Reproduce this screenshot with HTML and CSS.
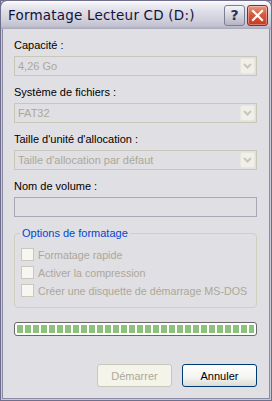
FILE: index.html
```html
<!DOCTYPE html>
<html lang="fr">
<head>
    <meta charset="UTF-8">
    <meta name="viewport" content="width=device-width, initial-scale=1.0">
    <title>Formatage Lecteur CD (D:)</title>
    <link rel="stylesheet" href="styles.css">
</head>
<body>
    <div class="window">
        <div class="titlebar">
            <span class="title">Formatage Lecteur CD (D:)</span>
            <div class="controls">
                <span class="tb-btn help">?</span>
                <span class="tb-btn close">
                    <svg width="13" height="13" viewBox="0 0 13 13">
                        <path d="M2 2 L11 11 M11 2 L2 11" stroke="#fff" stroke-width="2.2" stroke-linecap="square"/>
                    </svg>
                </span>
            </div>
        </div>

        <div class="client">
            <div class="label">Capacité :</div>
            <div class="combo">
                <span class="value">4,26 Go</span>
                <span class="arrow"><svg width="9" height="6" viewBox="0 0 9 6"><path d="M1 1 L4.5 4.5 L8 1" fill="none" stroke="#c9c7ba" stroke-width="2"/></svg></span>
            </div>

            <div class="label">Système de fichiers :</div>
            <div class="combo">
                <span class="value">FAT32</span>
                <span class="arrow"><svg width="9" height="6" viewBox="0 0 9 6"><path d="M1 1 L4.5 4.5 L8 1" fill="none" stroke="#c9c7ba" stroke-width="2"/></svg></span>
            </div>

            <div class="label">Taille d'unité d'allocation :</div>
            <div class="combo">
                <span class="value">Taille d'allocation par défaut</span>
                <span class="arrow"><svg width="9" height="6" viewBox="0 0 9 6"><path d="M1 1 L4.5 4.5 L8 1" fill="none" stroke="#c9c7ba" stroke-width="2"/></svg></span>
            </div>

            <div class="label">Nom de volume :</div>
            <div class="textbox"></div>

            <fieldset class="group">
                <legend>Options de formatage</legend>
                <div class="check"><span class="box"></span>Formatage rapide</div>
                <div class="check"><span class="box"></span>Activer la compression</div>
                <div class="check"><span class="box"></span>Créer une disquette de démarrage MS-DOS</div>
            </fieldset>

            <div class="progress"><div class="fill"></div></div>

            <div class="buttons">
                <span class="btn disabled">Démarrer</span>
                <span class="btn default">Annuler</span>
            </div>
        </div>
    </div>
</body>
</html>
```

FILE: styles.css
```css
body {
    margin: 0;
    background-color: #e0dfe3;
}
.window {
    width: 272px;
    height: 401px;
    box-sizing: border-box;
    background-color: #e0dfe3;
    border: 1px solid #6f6e8c;
    box-shadow: inset 0 0 0 1px #c8c7d6, inset 0 0 0 2px #8c8ba6;
    display: flex;
    flex-direction: column;
    font-family: "Liberation Sans", Arial, sans-serif;
    font-size: 11px;
}
.titlebar {
    height: 28px;
    margin: -1px -1px 0 -1px;
    border-radius: 7px 7px 0 0;
    border: 1px solid #6f6e8c;
    border-bottom: none;
    background: linear-gradient(#ffffff 0%, #eeeef4 12%, #dcdce6 40%, #cfcfdb 70%, #c0c0cf 90%, #a8a8ba 100%);
    display: flex;
    align-items: center;
    justify-content: space-between;
    padding: 0 3px 0 7px;
}
.title {
    font-family: "DejaVu Sans", sans-serif;
    font-size: 13.5px;
    color: #14123c;
    letter-spacing: 0.2px;
}
.controls {
    display: flex;
    gap: 2px;
}
.tb-btn {
    width: 21px;
    height: 21px;
    box-sizing: border-box;
    border-radius: 3px;
    display: flex;
    align-items: center;
    justify-content: center;
}
.help {
    border: 1px solid #7d7d94;
    background: linear-gradient(#f4f4f8, #d6d6e0 50%, #b4b4c4);
    color: #2f2f4f;
    font-family: "DejaVu Sans", sans-serif;
    font-weight: bold;
    font-size: 14px;
}
.close {
    border: 1px solid #8a2c24;
    background: linear-gradient(#e89a84, #d8583c 45%, #c63a22);
    box-shadow: inset 0 0 0 1px rgba(255, 255, 255, 0.35);
}
.client {
    flex: 1;
    padding: 10px 14px 0 13px;
    display: flex;
    flex-direction: column;
}
.label {
    color: #000;
    line-height: 13px;
    margin-bottom: 4px;
}
.combo {
    height: 20px;
    box-sizing: border-box;
    border: 1px solid #c9c7ba;
    display: flex;
    align-items: center;
    justify-content: space-between;
    padding: 0 1px 0 3px;
    margin-bottom: 10px;
}
.value {
    color: #aca899;
}
.arrow {
    width: 15px;
    height: 16px;
    box-sizing: border-box;
    border: 1px solid #e8e7df;
    border-radius: 2px;
    background-color: #f0efe8;
    display: flex;
    align-items: center;
    justify-content: center;
}
.textbox {
    height: 20px;
    box-sizing: border-box;
    border: 1px solid #a9a8b8;
    margin-bottom: 10px;
}
.group {
    margin: 0;
    padding: 9px 6px 10px 6px;
    border: 1px solid #d0d0bf;
    border-radius: 4px;
    display: flex;
    flex-direction: column;
    gap: 5px;
}
.group legend {
    color: #0046d5;
    padding: 0 2px;
    margin-left: -1px;
}
.check {
    display: flex;
    align-items: center;
    gap: 4px;
    color: #aca899;
    height: 13px;
    font-size: 10.7px;
    white-space: nowrap;
}
.box {
    width: 13px;
    height: 13px;
    flex-shrink: 0;
    box-sizing: border-box;
    border: 1px solid #cac8bb;
    background-color: #f7f6f1;
}
.progress {
    margin-top: 14px;
    height: 14px;
    box-sizing: border-box;
    border: 1px solid #686868;
    border-radius: 3px;
    background-color: #fff;
    padding: 2px;
}
.fill {
    height: 100%;
    background: repeating-linear-gradient(90deg, #8cc37c 0, #8cc37c 6px, #ffffff 6px, #ffffff 8px);
}
.buttons {
    margin-top: 28px;
    display: flex;
    justify-content: flex-end;
    gap: 10px;
}
.btn {
    width: 75px;
    height: 23px;
    box-sizing: border-box;
    border-radius: 3px;
    display: flex;
    align-items: center;
    justify-content: center;
}
.disabled {
    border: 1px solid #c9c7ba;
    background-color: #f5f4ea;
    color: #aca899;
}
.default {
    border: 1px solid #003c74;
    background: linear-gradient(#ffffff, #f3f3ef 60%, #dcdbd5);
    color: #000;
}
```
